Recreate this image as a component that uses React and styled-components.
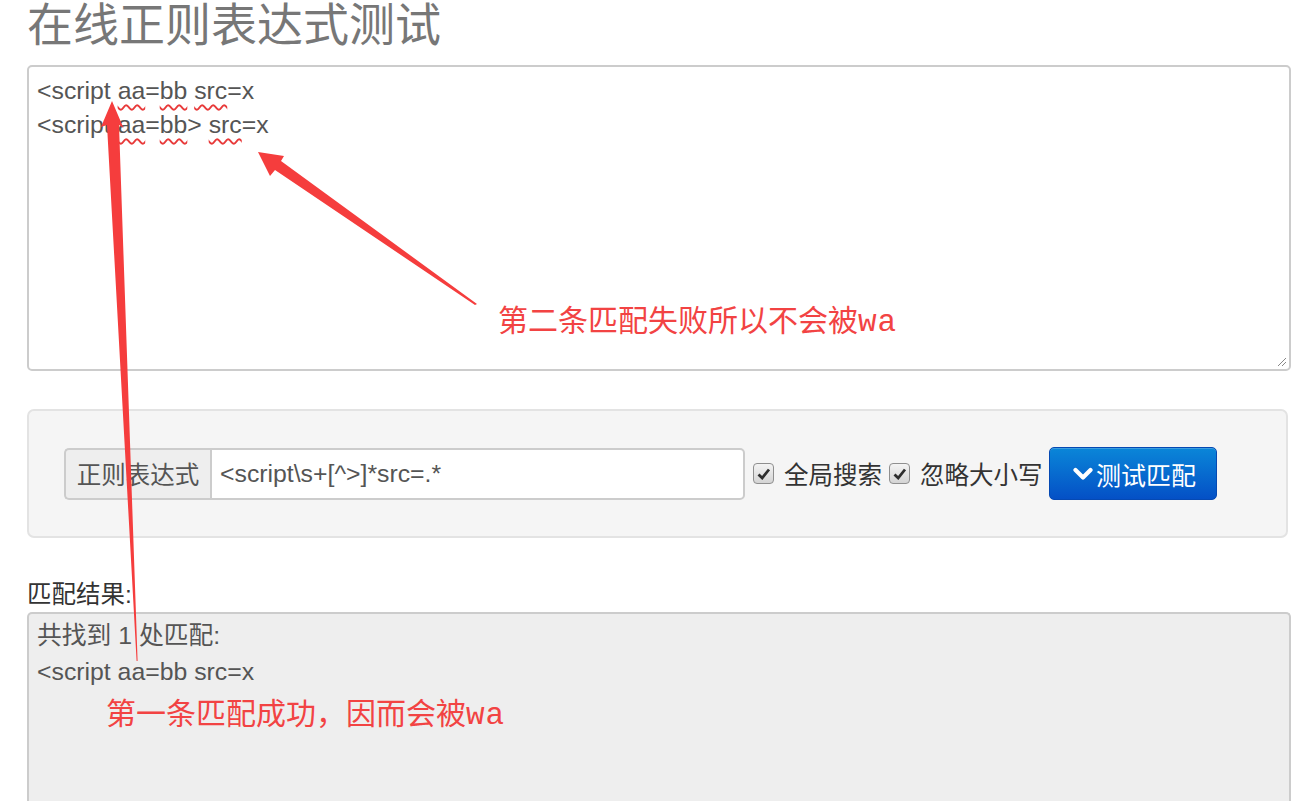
import React from "react"
import styled, { createGlobalStyle } from "styled-components"

const GlobalStyle = createGlobalStyle`
  html, body {
    margin: 0;
    padding: 0;
    background: #fff;
    overflow: hidden;
  }
  body {
    font-family: "Liberation Sans", "Noto Sans CJK SC", sans-serif;
    color: #555;
  }
`

const Page = styled.div`
  position: relative;
  width: 1295px;
  height: 801px;
  padding: 0 4px 0 27px;
  box-sizing: border-box;
`

const Title = styled.h1`
  margin: 0;
  font-size: 46px;
  line-height: 50px;
  font-weight: normal;
  color: #777;
`

const Editor = styled.div`
  position: relative;
  margin-top: 15px;
  height: 306px;
  box-sizing: border-box;
  border: 2px solid #ccc;
  border-radius: 5px;
  padding: 7px 8px;
  font-size: 24.8px;
  line-height: 34px;
  color: #555;
  background: #fff;
`

const Typo = styled.span`
  text-decoration: underline wavy #e83a3a;
  text-decoration-thickness: 1.5px;
  text-underline-offset: 5px;
`

const Grip = styled.svg`
  position: absolute;
  right: 2px;
  bottom: 2px;
`

const Well = styled.div`
  margin-top: 38px;
  margin-right: 3px;
  height: 129px;
  box-sizing: border-box;
  background: #f5f5f5;
  border: 2px solid #e3e3e3;
  border-radius: 7px;
  display: flex;
  align-items: center;
  padding-left: 35px;
`

const InputGroup = styled.div`
  display: flex;
  height: 52px;
`

const Addon = styled.span`
  display: flex;
  align-items: center;
  box-sizing: border-box;
  width: 146px;
  justify-content: center;
  background: #eee;
  border: 2px solid #ccc;
  border-right: none;
  border-radius: 5px 0 0 5px;
  font-size: 24.5px;
  color: #555;
`

const Field = styled.div`
  display: flex;
  align-items: center;
  box-sizing: border-box;
  width: 535px;
  padding-left: 8px;
  background: #fff;
  border: 2px solid #ccc;
  border-radius: 0 5px 5px 0;
  font-size: 24.8px;
  color: #555;
`

const Check = styled.label`
  display: flex;
  align-items: center;
  gap: 10px;
  margin-left: ${p => p.$gap}px;
  font-size: 24.5px;
  color: #333;
`

const Box = styled.span`
  width: 21px;
  height: 21px;
  box-sizing: border-box;
  border: 1px solid #8f8f8f;
  border-radius: 4px;
  background: linear-gradient(#f4f4f4, #d4d4d4);
  display: flex;
  align-items: center;
  justify-content: center;
`

const Button = styled.button`
  margin-left: 6px;
  width: 168px;
  height: 53px;
  display: flex;
  align-items: center;
  justify-content: center;
  gap: 3px;
  border: 1px solid #0549b3;
  border-radius: 5px;
  background: linear-gradient(#0a86d8, #0450c6);
  color: #fff;
  font-family: "Liberation Sans", "Noto Sans CJK SC", sans-serif;
  font-size: 25px;
  padding: 0 0 0 4px;
  box-shadow: inset 0 1px 0 rgba(255, 255, 255, 0.2);
`

const Label = styled.div`
  margin-top: 40px;
  font-size: 24.5px;
  line-height: 34px;
  color: #333;
`

const Result = styled.div`
  height: 220px;
  box-sizing: border-box;
  border: 2px solid #ccc;
  border-bottom: none;
  border-radius: 5px 5px 0 0;
  background: #eee;
  padding: 4px 8px;
  font-size: 24.8px;
  line-height: 36px;
  color: #555;
`

const Note = styled.div`
  position: absolute;
  left: ${p => p.$x}px;
  top: ${p => p.$y}px;
  font-family: "Noto Sans CJK SC", sans-serif;
  font-size: 30px;
  line-height: 36px;
  color: #f24343;
  white-space: nowrap;

  & > span {
    font-family: "Liberation Mono", monospace;
    font-size: 31px;
    letter-spacing: 1px;
  }
`

const Arrows = styled.svg`
  position: absolute;
  left: 0;
  top: 0;
  pointer-events: none;
`

const Tick = () => (
  <svg width="14" height="12" viewBox="0 0 14 12">
    <path d="M1.5 6.5 L5.2 10 L12 1.5" fill="none" stroke="#2e2e2e" strokeWidth="2.8" />
  </svg>
)

export default function App() {
  return (
    <>
      <GlobalStyle />
      <Page>
        <Title>在线正则表达式测试</Title>
        <Editor>
          <div>
            &lt;script <Typo>aa</Typo>=<Typo>bb</Typo> <Typo>src</Typo>=x
          </div>
          <div>
            &lt;script <Typo>aa</Typo>=<Typo>bb</Typo>&gt; <Typo>src</Typo>=x
          </div>
          <Grip width="12" height="12" viewBox="0 0 12 12">
            <path d="M11 3 L3 11 M11 7 L7 11" stroke="#888" strokeWidth="1" />
          </Grip>
        </Editor>

        <Well>
          <InputGroup>
            <Addon>正则表达式</Addon>
            <Field>&lt;script\s+[^&gt;]*src=.*</Field>
          </InputGroup>
          <Check $gap={8}>
            <Box>
              <Tick />
            </Box>
            全局搜索
          </Check>
          <Check $gap={7}>
            <Box>
              <Tick />
            </Box>
            忽略大小写
          </Check>
          <Button>
            <svg width="20" height="14" viewBox="0 0 20 14">
              <path d="M2.5 3 L10 10.5 L17.5 3" fill="none" stroke="#fff" strokeWidth="4.2" strokeLinejoin="round" strokeLinecap="round" />
            </svg>
            测试匹配
          </Button>
        </Well>

        <Label>匹配结果:</Label>
        <Result>
          <div>共找到 1 处匹配:</div>
          <div>&lt;script aa=bb src=x</div>
        </Result>

        <Note $x={498} $y={300}>
          第二条匹配失败所以不会被<span>wa</span>
        </Note>
        <Note $x={106} $y={693}>
          第一条匹配成功，因而会被<span>wa</span>
        </Note>

        <Arrows width="1295" height="801" viewBox="0 0 1295 801">
          <polygon
            fill="#f53d3d"
            points="112,101 123.5,128 119,125 137.6,661 136.6,661 107,125 101,127"
          />
          <polygon
            fill="#f53d3d"
            points="258,152 284,156 281,161 477,304 475,305 275,170 270,176"
          />
        </Arrows>
      </Page>
    </>
  )
}
